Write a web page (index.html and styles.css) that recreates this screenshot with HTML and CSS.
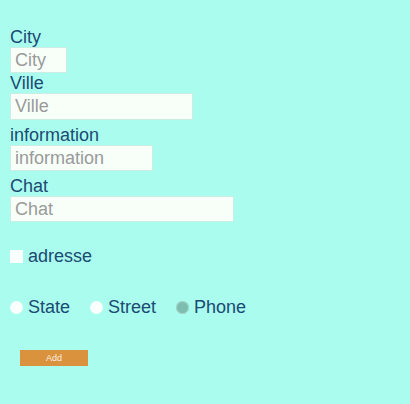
FILE: index.html
```html
<!DOCTYPE html>
<html>
<head>
<meta charset="utf-8">
<link rel="stylesheet" href="styles.css">
</head>
<body>
<form class="form">
  <div class="field">
    <label class="lbl">City</label>
    <input class="inp w-city" placeholder="City">
  </div>
  <div class="field">
    <label class="lbl">Ville</label>
    <input class="inp w-ville tall" placeholder="Ville">
  </div>
  <div class="field spaced">
    <label class="lbl">information</label>
    <input class="inp w-info" placeholder="information">
  </div>
  <div class="field spaced">
    <label class="lbl">Chat</label>
    <input class="inp w-chat" placeholder="Chat">
  </div>
  <div class="check-row">
    <input type="checkbox" class="cb">
    <span class="opt">adresse</span>
  </div>
  <div class="radio-row">
    <label class="ropt"><input type="radio" name="r" class="rd"><span class="opt">State</span></label>
    <label class="ropt"><input type="radio" name="r" class="rd"><span class="opt">Street</span></label>
    <label class="ropt"><input type="radio" name="r" class="rd" checked><span class="opt">Phone</span></label>
  </div>
  <div class="btn-row">
    <button type="button" class="btn">Add</button>
  </div>
</form>
</body>
</html>
```
FILE: styles.css
```css
html, body {
  margin: 0;
  padding: 0;
  background: #aafcef;
  font-family: "Liberation Sans", Arial, sans-serif;
  color: #1b4a72;
}
.form {
  padding: 27px 0 0 10px;
}
.field {
  display: flex;
  flex-direction: column;
  align-items: flex-start;
}
.field.spaced {
  margin-top: 5px;
}
.lbl {
  display: block;
  font-size: 18px;
  line-height: 20px;
  height: 20px;
}
.inp {
  box-sizing: border-box;
  height: 26px;
  margin: 0;
  padding: 0 4px;
  border: 1px solid #c9eee3;
  background: #f8fff9;
  font-family: "Liberation Sans", Arial, sans-serif;
  font-size: 18px;
  color: #333;
  outline: none;
}
.inp::placeholder { color: #9a9a9a; }
.tall { height: 27px; }
.w-city { width: 57px; }
.w-ville { width: 183px; }
.w-info { width: 143px; }
.w-chat { width: 224px; }
.check-row {
  display: flex;
  align-items: center;
  margin-top: 24px;
  height: 20px;
}
.cb {
  appearance: none;
  -webkit-appearance: none;
  width: 13px;
  height: 13px;
  margin: 0 5px 0 0;
  background: #fafffd;
  border: none;
  border-radius: 1px;
}
.opt {
  font-size: 18px;
  line-height: 20px;
}
.radio-row {
  display: flex;
  align-items: center;
  margin-top: 31px;
  height: 20px;
  gap: 20px;
}
.ropt {
  display: flex;
  align-items: center;
}
.rd {
  appearance: none;
  -webkit-appearance: none;
  width: 13px;
  height: 13px;
  margin: 0 5px 0 0;
  border-radius: 50%;
  background: #fafffd;
  border: none;
}
.rd:checked {
  background: #7dbdaf;
  box-shadow: inset 0 0 0 1px #a9d7cc;
}
.btn-row {
  margin-top: 30px;
  padding-left: 10px;
}
.btn {
  width: 68px;
  height: 16px;
  padding: 0;
  border: none;
  background: #da923d;
  color: #fbefe0;
  font-family: "Liberation Sans", Arial, sans-serif;
  font-size: 9px;
}
```
